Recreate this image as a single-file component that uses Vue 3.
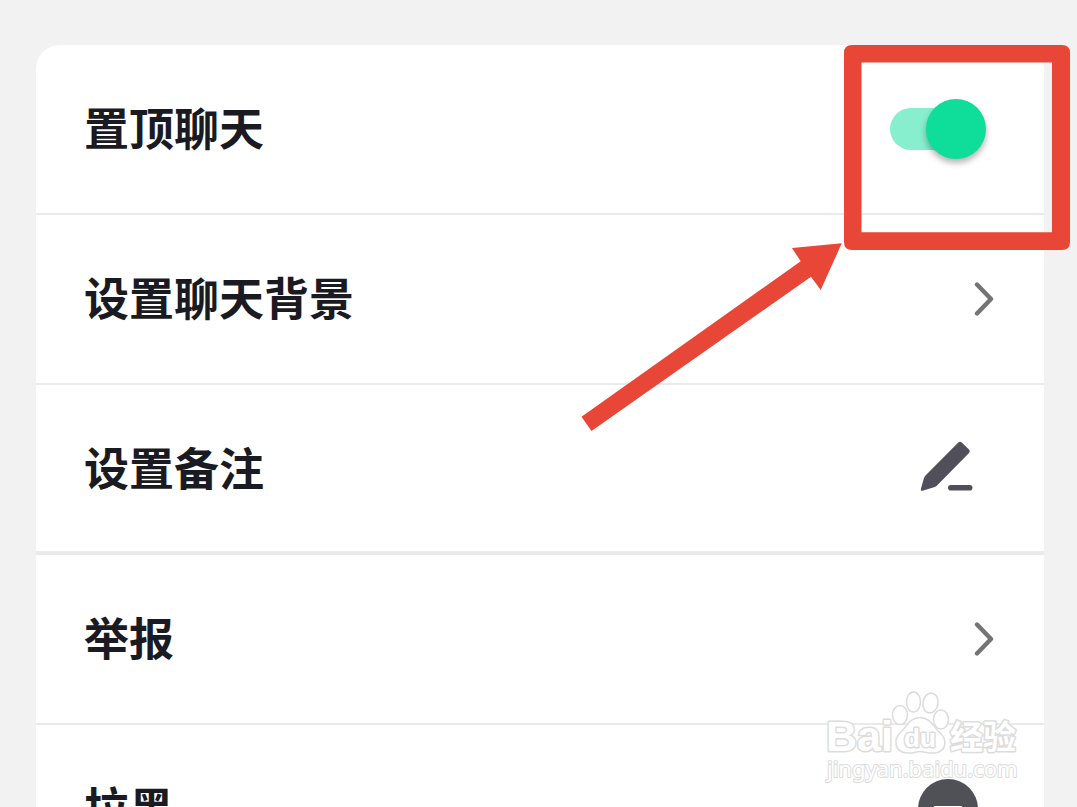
<script setup>
import { ref } from 'vue'

const pinned = ref(true)

const actions = [
  { label: '设置聊天背景', icon: 'chevron' },
  { label: '设置备注', icon: 'pencil', section: true },
  { label: '举报', icon: 'chevron' },
  { label: '拉黑', icon: 'block' },
]
</script>

<template>
  <main class="page">
    <ul class="card">
      <li class="item">
        <label class="row" for="pin-chat">
          <span class="label">置顶聊天</span>
          <input id="pin-chat" v-model="pinned" class="switch" type="checkbox" role="switch" />
        </label>
      </li>
      <li v-for="action in actions" :key="action.label" class="item" :class="{ section: action.section }">
        <button class="row" type="button">
          <span class="label">{{ action.label }}</span>
          <svg class="icon" viewBox="0 0 104 64" aria-hidden="true">
            <path
              v-if="action.icon === 'chevron'"
              d="M87 17.5 101 32 87 46.5"
              fill="none"
              stroke="#747474"
              stroke-width="4.4"
              stroke-linecap="round"
              stroke-linejoin="round"
            />
            <g v-else-if="action.icon === 'pencil'" fill="#51505a">
              <path
                d="M68.3 5.5Q70 4 71.700 5.500L79 12.500Q80.700 14.300 79 16L47.500 48Q46 49.700 44 50.200L32.500 53.700Q30.600 54.200 30.800 52.200L33.800 41.500Q34.300 39.600 35.500 38.400Z"
              />
              <rect x="58" y="48" width="24.500" height="5.600" rx="2.800" />
            </g>
            <g v-else>
              <circle cx="58" cy="32" r="30" fill="#505157" />
              <rect x="44" y="29" width="28" height="6" fill="#fff" />
            </g>
          </svg>
        </button>
      </li>
    </ul>

    <svg class="callout" viewBox="0 0 490 387" aria-hidden="true">
      <path
        fill="#e84737"
        fill-rule="evenodd"
        d="M272 0H482Q490 0 490 8V197Q490 205 482 205H272Q264 205 264 197V8Q264 0 272 0ZM281.500 17.500V187.300H472V17.500Z"
      />
      <path
        fill="#e84737"
        d="M1.500 371.700 11.500 386 231 231.700 240.700 245 261.800 198.300 212 203 220.700 216.300Z"
      />
    </svg>

    <svg class="watermark" viewBox="0 0 200 100">
      <g class="outline">
        <text class="brand" x="2" y="61">Bai</text>
        <ellipse cx="76" cy="25" rx="7.500" ry="9.500" />
        <ellipse cx="89.500" cy="12" rx="7" ry="10" />
        <ellipse cx="106.500" cy="13" rx="7.500" ry="10" transform="rotate(10 106.500 13)" />
        <ellipse cx="117" cy="29.500" rx="7.500" ry="9.500" />
        <path
          d="M96 27.500C106 27.500 109 36 115 42C124 49 123 62 110 63C104 63.500 100 61.500 96 61.500C92 61.500 89 63.500 83 63C70 62 69 49 77 42C83 36 86 27.500 96 27.500Z"
        />
        <text class="du" x="80" y="57">du</text>
        <text class="cjk" x="126" y="59">经验</text>
        <text class="url" x="3" y="87">jingyan.baidu.com</text>
      </g>
    </svg>
  </main>
</template>

<style>
body {
  background: #f2f2f2;
}
</style>

<style scoped>
.page {
  position: relative;
  box-sizing: border-box;
  height: 100vh;
  padding: 45px 33px 0 36px;
  overflow: hidden;
  background: #f2f2f2;
  font-family: "Noto Sans CJK SC", sans-serif;
}

.card {
  margin: 0;
  padding: 0;
  list-style: none;
  background: #fff;
  border-radius: 24px;
}

.item {
  border-bottom: 2px solid #eaeaea;
}

.item.section {
  border-bottom-width: 4px;
}

.row {
  display: flex;
  align-items: center;
  justify-content: space-between;
  box-sizing: border-box;
  width: 100%;
  padding: 52px 50px 52px 48px;
  border: 0;
  background: none;
  color: #1a1a22;
  font: inherit;
  text-align: left;
  cursor: pointer;
}

.section .row {
  padding-bottom: 50px;
}

.label {
  padding-bottom: 4px;
  font-size: 45px;
  font-weight: 700;
  line-height: 60px;
}

.icon {
  width: 104px;
  height: 64px;
}

.switch {
  position: relative;
  width: 96px;
  height: 60px;
  margin: 0 8px 0 0;
  appearance: none;
  cursor: pointer;
}

.switch::before {
  content: "";
  position: absolute;
  inset: 9px 12px 9px 0;
  border-radius: 21px;
  background: #d0d0d0;
}

.switch::after {
  content: "";
  position: absolute;
  top: 0;
  left: 0;
  width: 60px;
  height: 60px;
  border-radius: 50%;
  background: #fff;
  box-shadow: 0 4px 6px rgba(0, 0, 0, 0.3);
}

.switch:checked::before {
  background: #87efcd;
}

.switch:checked::after {
  left: 36px;
  background: #0fdd9a;
}

.callout {
  position: absolute;
  top: 45px;
  right: 7px;
  width: 490px;
  height: 387px;
  pointer-events: none;
}

.watermark {
  position: absolute;
  right: 53px;
  bottom: 17px;
  width: 200px;
  height: 100px;
  pointer-events: none;
}

.outline {
  fill: #fff;
  stroke: #dcdcdc;
  stroke-width: 1.5;
}

.outline text {
  stroke-width: 3;
  stroke-linejoin: round;
  paint-order: stroke;
}

.brand {
  font: 700 43px "Liberation Sans", sans-serif;
}

.du {
  font: 700 26px "Liberation Sans", sans-serif;
}

.cjk {
  font: 700 33px "Noto Sans CJK SC", sans-serif;
}

.outline .url {
  font: 400 22px "Noto Sans", sans-serif;
  stroke-width: 2;
}
</style>
